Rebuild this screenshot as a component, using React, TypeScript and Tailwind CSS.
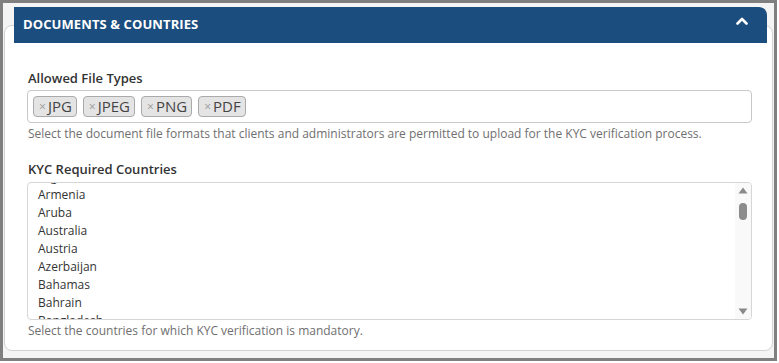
const countries = [
  "Argentina",
  "Armenia",
  "Aruba",
  "Australia",
  "Austria",
  "Azerbaijan",
  "Bahamas",
  "Bahrain",
  "Bangladesh",
  "Barbados",
];

const fileTypes = ["JPG", "JPEG", "PNG", "PDF"];

export default function App() {
  return (
    <div
      className="w-[777px] h-[361px] border-[3px] border-[#7f7f7f] bg-[#f4f4f4] overflow-hidden"
      style={{ fontFamily: '"Open Sans", "Noto Sans", sans-serif' }}
    >
      <div className="ml-[1px] mt-[22px] w-[769px] h-[326px] rounded-[8px] border border-[#d2d2d2] bg-white">
        {/* header */}
        <div className="ml-[9px] -mt-[19px] w-[753px] h-[36px] rounded-tr-[8px] bg-[#1b4d7e] flex items-center justify-between pl-[9px] pr-[19px]">
          <h2 className="text-[13px] font-bold text-white tracking-[0.1px]">
            DOCUMENTS &amp; COUNTRIES
          </h2>
          <svg width="12" height="8" viewBox="0 0 12 8" className="mb-[9px]">
            <polyline
              points="1.5,6.5 6,2 10.5,6.5"
              fill="none"
              stroke="white"
              strokeWidth="2.6"
              strokeLinecap="round"
              strokeLinejoin="round"
            />
          </svg>
        </div>

        <div className="pl-[22px] pr-[20px] pt-[26px]">
          {/* file types */}
          <label className="block pl-[1px] text-[13px] leading-[18px] font-semibold text-[#333]">
            Allowed File Types
          </label>
          <div className="mt-[3px] h-[33px] rounded-[4px] border border-[#c8c8c8] flex items-center gap-[6px] px-[5px]">
            {fileTypes.map((t) => (
              <span
                key={t}
                className="h-[21px] flex items-center rounded-[4px] border border-[#aaaaaa] bg-[#e4e4e4] pl-[5px] pr-[4px] text-[15px] text-[#444]"
              >
                <span className="text-[12px] text-[#999] mr-[2px]">×</span>
                {t}
              </span>
            ))}
          </div>
          <p className="mt-[4px] pl-[1px] text-[12px] leading-[14px] text-[#6f6f6f]">
            Select the document file formats that clients and administrators are permitted to upload for the KYC verification process.
          </p>

          {/* countries */}
          <label className="block mt-[19px] pl-[1px] text-[13px] leading-[18px] font-semibold text-[#333]">
            KYC Required Countries
          </label>
          <div className="mt-[4px] h-[138px] rounded-[4px] border border-[#d6d6d6] flex overflow-hidden">
            <div className="flex-1 overflow-hidden">
              <ul className="-mt-[15px] pl-[10px]">
                {countries.map((c) => (
                  <li key={c} className="h-[18px] text-[12px] leading-[18px] text-[#333]">
                    {c}
                  </li>
                ))}
              </ul>
            </div>
            <div className="w-[16px] bg-[#f9f9f9] flex flex-col items-center justify-between py-[4px]">
              <div className="flex flex-col items-center">
                <svg width="10" height="7" viewBox="0 0 10 7">
                  <polygon points="5,0.5 9.5,6.5 0.5,6.5" fill="#8a8a8a" />
                </svg>
                <div className="mt-[9px] w-[8px] h-[17px] rounded-full bg-[#8c8c8c]" />
              </div>
              <svg width="10" height="7" viewBox="0 0 10 7">
                <polygon points="0.5,0.5 9.5,0.5 5,6.5" fill="#8a8a8a" />
              </svg>
            </div>
          </div>
          <p className="mt-[4px] pl-[1px] text-[12px] leading-[14px] text-[#6f6f6f]">
            Select the countries for which KYC verification is mandatory.
          </p>
        </div>
      </div>
    </div>
  );
}
